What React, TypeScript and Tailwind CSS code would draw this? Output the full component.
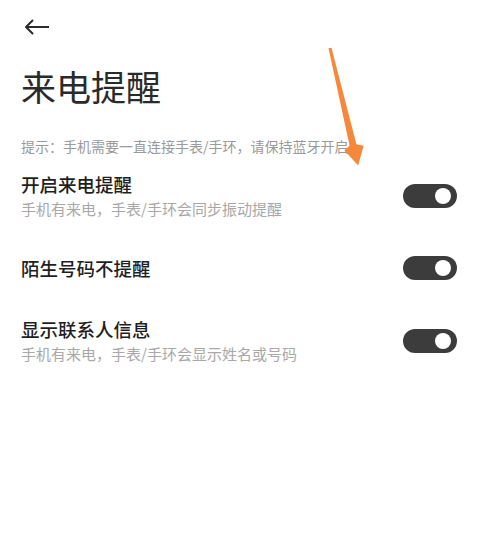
import { ReactNode } from "react";

interface SettingRowProps {
  title: string;
  desc?: string;
  on?: boolean;
}

function Toggle({ on = true }: { on?: boolean }) {
  return (
    <div
      className={`flex h-[24px] w-[54px] shrink-0 items-center rounded-full px-[6px] ${
        on ? "justify-end bg-[#3c3c3c]" : "justify-start bg-[#d9d9d9]"
      }`}
    >
      <div className="h-[16px] w-[16px] rounded-full bg-white" />
    </div>
  );
}

function SettingRow({ title, desc, on = true }: SettingRowProps) {
  return (
    <div className="flex items-center justify-between">
      <div className="flex flex-col gap-[3px]">
        <span className="text-[18.5px] font-medium leading-[24px] text-[#1f1f1f]">{title}</span>
        {desc && (
          <span className="text-[15px] leading-[20px] text-[#a8a8a8]">{desc}</span>
        )}
      </div>
      <Toggle on={on} />
    </div>
  );
}

function Page({ children }: { children: ReactNode }) {
  return (
    <div
      className="relative h-[547px] w-[477px] overflow-hidden bg-white"
      style={{ fontFamily: '"Noto Sans CJK SC", "Noto Sans", sans-serif' }}
    >
      {children}
    </div>
  );
}

export default function App() {
  return (
    <Page>
      {/* Header */}
      <div className="flex h-[54px] items-center pl-[24px]">
        <svg width="26" height="16" viewBox="0 0 26 16" fill="none" stroke="#2b2b2b" strokeWidth={2}>
          <path d="M25 8H2" />
          <path d="M8.5 1.5L2 8l6.5 6.5" strokeLinecap="round" strokeLinejoin="round" />
        </svg>
      </div>

      <div className="pl-[21px] pr-[20px]">
        <h1 className="mt-[12px] text-[35px] font-normal leading-[40px] text-[#2a2a2a]">来电提醒</h1>

        <p className="mt-[30px] text-[14px] leading-[20px] text-[#9a9a9a]">
          提示：手机需要一直连接手表/手环，请保持蓝牙开启
        </p>

        <div className="mt-[16px] flex flex-col gap-[37px]">
          <SettingRow title="开启来电提醒" desc="手机有来电，手表/手环会同步振动提醒" />
          <SettingRow title="陌生号码不提醒" />
          <SettingRow title="显示联系人信息" desc="手机有来电，手表/手环会显示姓名或号码" />
        </div>
      </div>

      {/* annotation arrow */}
      <svg className="pointer-events-none absolute left-0 top-0" width="477" height="547">
        <polygon
          points="328.5,48.3 331.5,47.7 356.4,144.2 363.7,145.7 358.1,165.5 344.3,150.3 349.6,145.8"
          fill="#f5883a"
        />
      </svg>
    </Page>
  );
}
